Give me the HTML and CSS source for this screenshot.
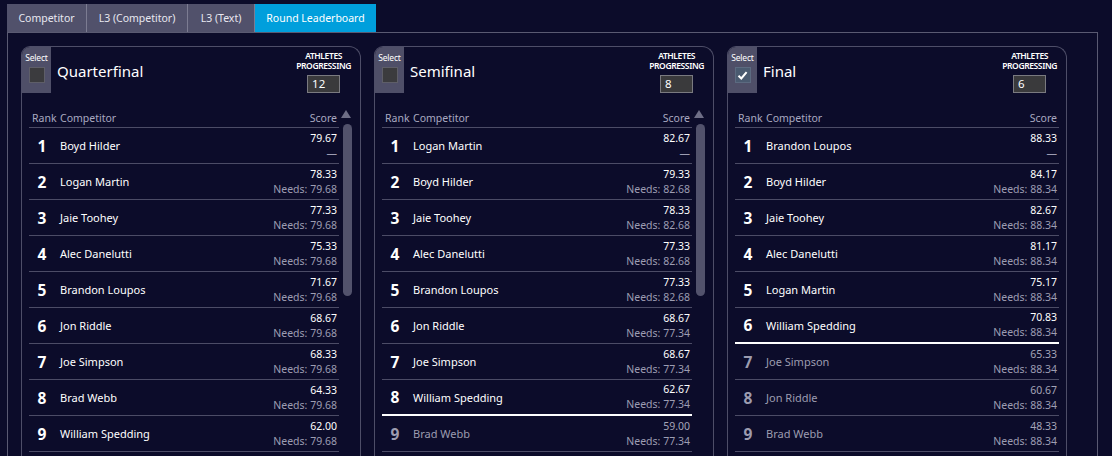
FILE: index.html
```html
<!DOCTYPE html>
<html>
<head>
<meta charset="utf-8">
<link rel="stylesheet" href="styles.css">
</head>
<body>
<div class="tabs">
  <div class="tab t1">Competitor</div>
  <div class="tab t2">L3 (Competitor)</div>
  <div class="tab t3">L3 (Text)</div>
  <div class="tab t4 active">Round Leaderboard</div>
</div>
<div class="content">
  <div class="panels">
    <!-- Quarterfinal -->
    <div class="panel">
      <div class="head">
        <div class="select"><div class="select-label">Select</div><div class="cb"></div></div>
        <div class="title">Quarterfinal</div>
        <div class="prog"><div class="prog-label">ATHLETES<br>PROGRESSING</div><div class="prog-input">12</div></div>
      </div>
      <div class="body">
        <div class="list">
          <div class="colhead"><span class="rank-h">Rank</span><span>Competitor</span><span class="score-h">Score</span></div>
          <div class="row"><span class="rank">1</span><span class="name">Boyd Hilder</span><span class="score"><span class="val">79.67</span><span class="needs">—</span></span></div>
          <div class="row"><span class="rank">2</span><span class="name">Logan Martin</span><span class="score"><span class="val">78.33</span><span class="needs">Needs: 79.68</span></span></div>
          <div class="row"><span class="rank">3</span><span class="name">Jaie Toohey</span><span class="score"><span class="val">77.33</span><span class="needs">Needs: 79.68</span></span></div>
          <div class="row"><span class="rank">4</span><span class="name">Alec Danelutti</span><span class="score"><span class="val">75.33</span><span class="needs">Needs: 79.68</span></span></div>
          <div class="row"><span class="rank">5</span><span class="name">Brandon Loupos</span><span class="score"><span class="val">71.67</span><span class="needs">Needs: 79.68</span></span></div>
          <div class="row"><span class="rank">6</span><span class="name">Jon Riddle</span><span class="score"><span class="val">68.67</span><span class="needs">Needs: 79.68</span></span></div>
          <div class="row"><span class="rank">7</span><span class="name">Joe Simpson</span><span class="score"><span class="val">68.33</span><span class="needs">Needs: 79.68</span></span></div>
          <div class="row"><span class="rank">8</span><span class="name">Brad Webb</span><span class="score"><span class="val">64.33</span><span class="needs">Needs: 79.68</span></span></div>
          <div class="row"><span class="rank">9</span><span class="name">William Spedding</span><span class="score"><span class="val">62.00</span><span class="needs">Needs: 79.68</span></span></div>
        </div>
        <div class="scroll">
          <svg class="arrow" width="10" height="8" viewBox="0 0 10 8"><path d="M0 8 L5 0 L10 8 Z" fill="#6e6e86"/></svg>
          <div class="thumb"></div>
        </div>
      </div>
    </div>
    <!-- Semifinal -->
    <div class="panel">
      <div class="head">
        <div class="select"><div class="select-label">Select</div><div class="cb"></div></div>
        <div class="title">Semifinal</div>
        <div class="prog"><div class="prog-label">ATHLETES<br>PROGRESSING</div><div class="prog-input">8</div></div>
      </div>
      <div class="body">
        <div class="list">
          <div class="colhead"><span class="rank-h">Rank</span><span>Competitor</span><span class="score-h">Score</span></div>
          <div class="row"><span class="rank">1</span><span class="name">Logan Martin</span><span class="score"><span class="val">82.67</span><span class="needs">—</span></span></div>
          <div class="row"><span class="rank">2</span><span class="name">Boyd Hilder</span><span class="score"><span class="val">79.33</span><span class="needs">Needs: 82.68</span></span></div>
          <div class="row"><span class="rank">3</span><span class="name">Jaie Toohey</span><span class="score"><span class="val">78.33</span><span class="needs">Needs: 82.68</span></span></div>
          <div class="row"><span class="rank">4</span><span class="name">Alec Danelutti</span><span class="score"><span class="val">77.33</span><span class="needs">Needs: 82.68</span></span></div>
          <div class="row"><span class="rank">5</span><span class="name">Brandon Loupos</span><span class="score"><span class="val">77.33</span><span class="needs">Needs: 82.68</span></span></div>
          <div class="row"><span class="rank">6</span><span class="name">Jon Riddle</span><span class="score"><span class="val">68.67</span><span class="needs">Needs: 77.34</span></span></div>
          <div class="row"><span class="rank">7</span><span class="name">Joe Simpson</span><span class="score"><span class="val">68.67</span><span class="needs">Needs: 77.34</span></span></div>
          <div class="row cut"><span class="rank">8</span><span class="name">William Spedding</span><span class="score"><span class="val">62.67</span><span class="needs">Needs: 77.34</span></span></div>
          <div class="row out"><span class="rank">9</span><span class="name">Brad Webb</span><span class="score"><span class="val">59.00</span><span class="needs">Needs: 77.34</span></span></div>
        </div>
        <div class="scroll">
          <svg class="arrow" width="10" height="8" viewBox="0 0 10 8"><path d="M0 8 L5 0 L10 8 Z" fill="#6e6e86"/></svg>
          <div class="thumb"></div>
        </div>
      </div>
    </div>
    <!-- Final -->
    <div class="panel">
      <div class="head">
        <div class="select"><div class="select-label">Select</div><div class="cb checked"><svg width="13" height="13" viewBox="0 0 13 13"><path d="M2.5 6.8 L5.3 9.5 L10.6 3.2" fill="none" stroke="#fff" stroke-width="2"/></svg></div></div>
        <div class="title">Final</div>
        <div class="prog"><div class="prog-label">ATHLETES<br>PROGRESSING</div><div class="prog-input">6</div></div>
      </div>
      <div class="body">
        <div class="list">
          <div class="colhead"><span class="rank-h">Rank</span><span>Competitor</span><span class="score-h">Score</span></div>
          <div class="row"><span class="rank">1</span><span class="name">Brandon Loupos</span><span class="score"><span class="val">88.33</span><span class="needs">—</span></span></div>
          <div class="row"><span class="rank">2</span><span class="name">Boyd Hilder</span><span class="score"><span class="val">84.17</span><span class="needs">Needs: 88.34</span></span></div>
          <div class="row"><span class="rank">3</span><span class="name">Jaie Toohey</span><span class="score"><span class="val">82.67</span><span class="needs">Needs: 88.34</span></span></div>
          <div class="row"><span class="rank">4</span><span class="name">Alec Danelutti</span><span class="score"><span class="val">81.17</span><span class="needs">Needs: 88.34</span></span></div>
          <div class="row"><span class="rank">5</span><span class="name">Logan Martin</span><span class="score"><span class="val">75.17</span><span class="needs">Needs: 88.34</span></span></div>
          <div class="row cut"><span class="rank">6</span><span class="name">William Spedding</span><span class="score"><span class="val">70.83</span><span class="needs">Needs: 88.34</span></span></div>
          <div class="row out"><span class="rank">7</span><span class="name">Joe Simpson</span><span class="score"><span class="val">65.33</span><span class="needs">Needs: 88.34</span></span></div>
          <div class="row out"><span class="rank">8</span><span class="name">Jon Riddle</span><span class="score"><span class="val">60.67</span><span class="needs">Needs: 88.34</span></span></div>
          <div class="row out"><span class="rank">9</span><span class="name">Brad Webb</span><span class="score"><span class="val">48.33</span><span class="needs">Needs: 88.34</span></span></div>
        </div>
      </div>
    </div>
  </div>
</div>
</body>
</html>
```
FILE: styles.css
```css
* { box-sizing: border-box; }
html, body { margin: 0; height: 456px; overflow: hidden; }
body {
  background: #0c0c2a;
  color: #ffffff;
  font-family: "Noto Sans", "DejaVu Sans", sans-serif;
}
.tabs { display: flex; margin: 4px 0 0 7px; height: 28px; }
.tab {
  background: #51516b;
  color: #e8e8f0;
  font-size: 10.5px;
  display: flex;
  align-items: center;
  justify-content: center;
  border-right: 1px solid #7c7c92;
}
.t1 { width: 80px; }
.t2 { width: 101px; }
.t3 { width: 67px; }
.t4 { width: 121px; }
.tab.active { background: #009fdc; color: #ffffff; border-right: none; }

.content {
  margin-left: 7px;
  width: 1091px;
  height: 430px;
  border: 1px solid #5a5a72;
  border-bottom: none;
  padding: 13px 0 0 13px;
}
.panels { display: flex; gap: 13px; }
.panel {
  width: 340px;
  height: 420px;
  border: 1px solid #4e4e68;
  border-bottom: none;
  border-radius: 9px 12px 0 0;
  overflow: hidden;
}
.head { display: flex; height: 46px; }
.select {
  width: 29px;
  background: #4f4f68;
  display: flex;
  flex-direction: column;
  align-items: center;
  padding-top: 5px;
}
.select-label { font-size: 8.5px; line-height: 11px; color: #ffffff; letter-spacing: -0.2px; }
.cb {
  width: 16px;
  height: 16px;
  margin-top: 4px;
  background: #3b3b3e;
  border: 1px solid #5e5e68;
  display: flex;
  align-items: center;
  justify-content: center;
}
.cb.checked { background: #4a5a70; border-color: #5c6a80; }
.title { font-size: 15px; margin-left: 6px; align-self: center; margin-top: 1px; }
.prog {
  margin-left: auto;
  margin-right: 9px;
  display: flex;
  flex-direction: column;
  align-items: center;
  padding-top: 4px;
}
.prog-label {
  font-size: 8.5px;
  line-height: 10px;
  text-align: center;
  font-weight: 600;
  letter-spacing: -0.4px;
}
.prog-input {
  width: 33px;
  height: 18px;
  margin-top: 4px;
  background: #3a3a3c;
  border: 1px solid #7a7a80;
  font-size: 11.5px;
  line-height: 16px;
  padding-left: 4px;
}
.body { display: flex; padding: 15px 7px 0 7px; }
.list { flex: 1; }
.colhead {
  display: flex;
  height: 20px;
  align-items: center;
  border-bottom: 1px solid #4c4c66;
  font-size: 10.5px;
  color: #a9a9c0;
  padding-right: 2px;
}
.rank-h { width: 31px; padding-left: 3px; }
.score-h { margin-left: auto; }
.row {
  display: flex;
  height: 36px;
  align-items: center;
  border-bottom: 1px solid #4c4c66;
  padding-right: 2px;
}
.rank { width: 26px; text-align: center; font-weight: 700; font-size: 15.5px; }
.name { font-size: 11px; margin-left: 5px; }
.score { margin-left: auto; display: flex; flex-direction: column; align-items: flex-end; }
.val { font-size: 10.5px; line-height: 15px; }
.needs { font-size: 10.5px; line-height: 15px; color: #9d9db2; }
.row.cut { border-bottom: 2px solid #ffffff; }
.row.out { color: #9c9cb0; }
.row.out .val { color: #a4a4b8; }
.scroll { width: 14px; display: flex; flex-direction: column; align-items: center; padding-top: 2px; }
.arrow { display: block; }
.thumb {
  width: 9px;
  height: 172px;
  margin-top: 6px;
  margin-left: 2px;
  background: #52526c;
  border-radius: 5px;
}
```
